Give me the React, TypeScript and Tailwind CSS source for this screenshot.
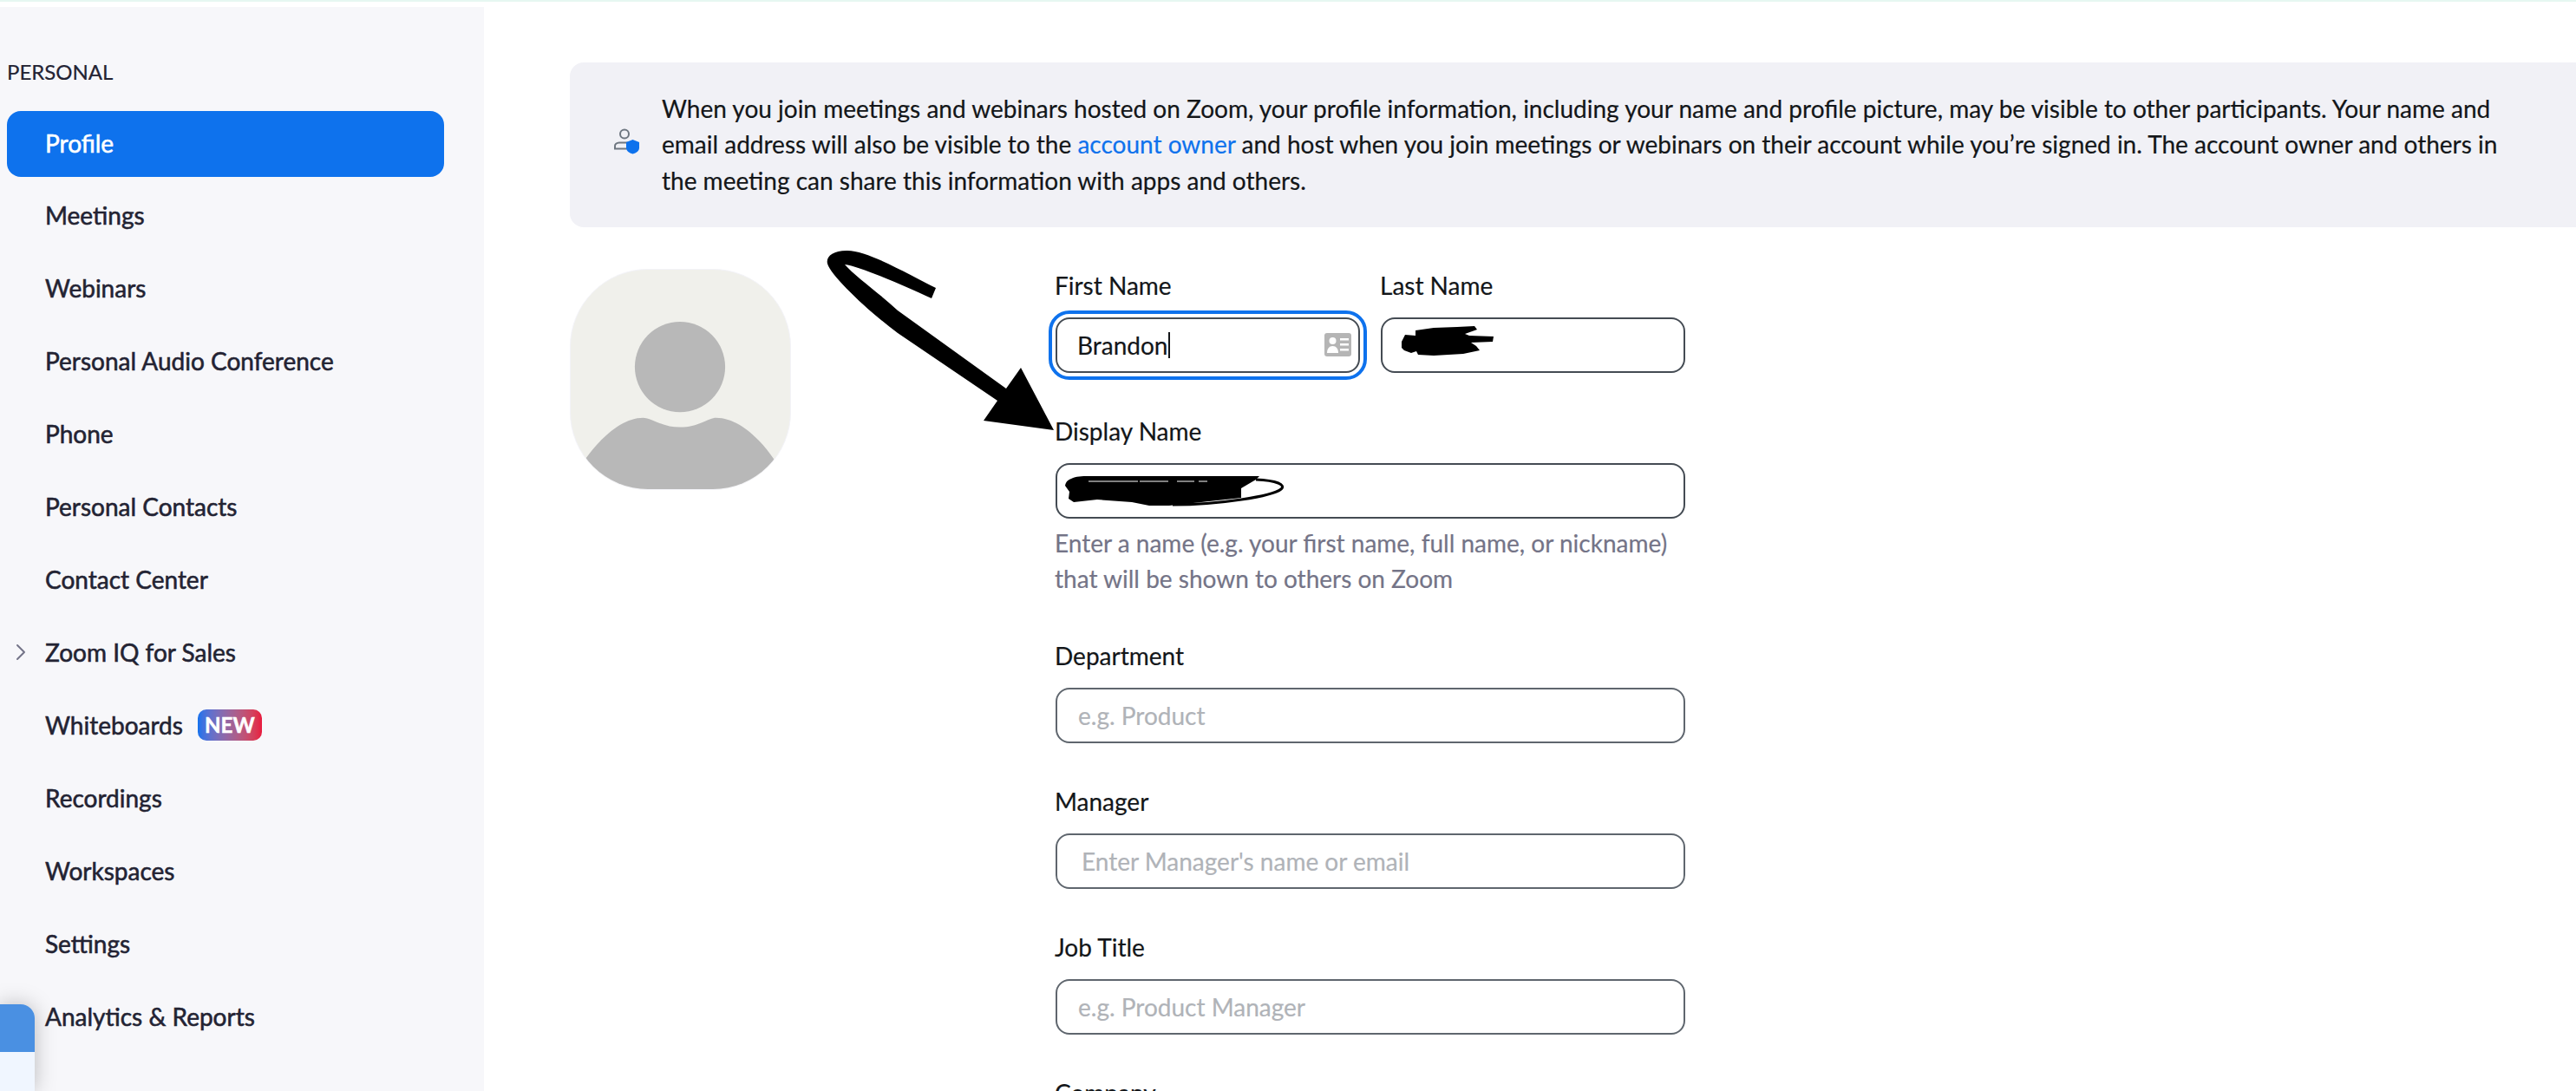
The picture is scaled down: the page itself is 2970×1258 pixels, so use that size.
import { ChevronRight } from 'lucide-react'

const navItems = [
  'Profile',
  'Meetings',
  'Webinars',
  'Personal Audio Conference',
  'Phone',
  'Personal Contacts',
  'Contact Center',
  'Zoom IQ for Sales',
  'Whiteboards',
  'Recordings',
  'Workspaces',
  'Settings',
  'Analytics & Reports',
]

function NavItem({ label }: { label: string }) {
  const active = label === 'Profile'
  return (
    <div
      className={`relative flex h-[76px] w-[504px] shrink-0 items-center rounded-[16px] pl-[44px] text-[28px] [-webkit-text-stroke:0.55px_currentColor] ${
        active ? '-mb-[2px] bg-[#0e72ed] pb-[2px] text-white' : 'text-[#232333]'
      }`}
    >
      {label === 'Zoom IQ for Sales' && (
        <ChevronRight className="absolute left-0 h-8 w-8 text-[#747487]" strokeWidth={1.5} />
      )}
      {label}
      {label === 'Whiteboards' && (
        <span className="ml-[17px] flex h-[36px] w-[74px] items-center justify-center rounded-[10px] bg-gradient-to-r from-[#0e72ed] to-[#e8173d] text-[24px] font-bold text-white">
          NEW
        </span>
      )}
    </div>
  )
}

function Sidebar() {
  return (
    <aside className="h-full w-[558px] shrink-0 bg-[#f7f7fa] pl-[8px] pt-[60px]">
      <div className="mb-[30px] h-[30px] text-[24px] leading-[30px] text-[#232333]">PERSONAL</div>
      <nav className="flex flex-col gap-2">
        {navItems.map(item => (
          <NavItem key={item} label={item} />
        ))}
      </nav>
    </aside>
  )
}

function PrivacyIcon() {
  return (
    <svg width="32" height="32" viewBox="0 0 32 32" fill="none" className="-mt-[6px] shrink-0">
      <circle cx="14" cy="6.5" r="5" stroke="#6e7680" strokeWidth="2" />
      <path d="M18 16.5H8a5 4 0 0 0-5 4.5v2.500H16" stroke="#6e7680" strokeWidth="2" strokeLinecap="round" />
      <path d="M23.500 13l7.500 3v6.500c0 3.500-3.500 6-7.500 7-4-1-7.500-3.500-7.500-7V16z" fill="#0e72ed" />
    </svg>
  )
}

function PrivacyBanner() {
  return (
    <div className="flex h-[190px] w-[2500px] items-center gap-[25px] rounded-[16px] bg-[#f1f1f6] pl-[49px]">
      <PrivacyIcon />
      <p className="text-[28px] leading-[41.6px] text-[#131619]">
        When you join meetings and webinars hosted on Zoom, your profile information, including your name and profile picture, may be visible to other participants. Your name and
        <br />
        email address will also be visible to the <span className="text-[#0e72ed]">account owner</span> and host when you join meetings or webinars on their account while you’re signed in. The account owner and others in
        <br />
        the meeting can share this information with apps and others.
      </p>
    </div>
  )
}

function Avatar() {
  return (
    <div className="h-[255px] w-[255px] shrink-0 overflow-hidden rounded-[90px] border border-[#f3f3f8] bg-[#f0f0eb]">
      <svg viewBox="0 0 255 255" className="h-full w-full">
        <circle cx="127" cy="113" r="52.500" fill="#b8b8b8" />
        <path d="M17 220C35 195 60 172 84 172c10 0 22 11 43 11s33-11 42-11c25 0 50 23 67 48L255 255H0z" fill="#b8b8b8" />
      </svg>
    </div>
  )
}

function ContactCardIcon() {
  return (
    <svg width="31" height="27" viewBox="0 0 31 27" className="absolute right-[8px] top-[16px]">
      <rect width="31" height="27" rx="3" fill="#b5b5b5" />
      <circle cx="9.500" cy="9" r="4" fill="#fff" />
      <path d="M3 23c0-5 2.500-8 6.500-8s6.500 3 6.500 8z" fill="#fff" />
      <rect x="18" y="6" width="10" height="2.500" fill="#fff" />
      <rect x="18" y="12" width="10" height="2.500" fill="#fff" />
      <rect x="18" y="18" width="10" height="2.500" fill="#fff" />
    </svg>
  )
}

function Label({ children }: { children: string }) {
  return <label className="-ml-[1px] h-[34px] text-[28px] leading-[34px] text-[#131619]">{children}</label>
}

function Field({
  label,
  placeholder,
  left = 'pl-[24px]',
}: {
  label: string
  placeholder: string
  left?: string
}) {
  return (
    <div className="flex flex-col">
      <Label>{label}</Label>
      <div className={`mt-[20px] flex h-[64px] w-[726px] items-center rounded-[16px] border-2 border-[#5f666e] ${left} text-[28px] text-[#b0b3b8]`}>
        {placeholder}
      </div>
    </div>
  )
}

function NameForm() {
  return (
    <div className="flex w-[726px] flex-col">
      <div className="flex gap-[24px]">
        <div className="flex w-[351px] flex-col">
          <Label>First Name</Label>
          <div className="relative mt-[20px] flex h-[64px] items-center rounded-[16px] border-2 border-[#444b53] pl-[23px] text-[28px] text-[#131619] outline-[4px] outline-offset-[4px] outline-[#0e72ed]">
            <span className="border-r-2 border-[#131619] pr-[1px] leading-[30px]">Brandon</span>
            <ContactCardIcon />
          </div>
        </div>
        <div className="flex w-[351px] flex-col">
          <Label>Last Name</Label>
          <div className="relative mt-[20px] h-[64px] rounded-[16px] border-2 border-[#444b53]">
            <svg width="110" height="36" viewBox="0 0 110 36" className="absolute left-[20px] top-[8px]">
              <path
                d="M2 18L6 10L18 11L18 5L39 2L66 1L86 0L89 4L75 9L80 11L108 12L107 18L82 19L88 23L92 28L73 32L39 34L21 33L19 29L13 31L5 28L2 25z"
                fill="#000"
              />
            </svg>
          </div>
        </div>
      </div>
      <div className="mt-[50px] flex flex-col">
        <Label>Display Name</Label>
        <div className="relative mt-[20px] h-[64px] rounded-[16px] border-2 border-[#444b53]">
          <svg width="260" height="44" viewBox="0 0 260 44" className="absolute left-[8px] top-[10px]">
            <path
              d="M1 14C2 9 5 7 8 6C14 3 20 3 28 3L225 3L221 7L204 17L204 28L121 37L98 37L78 33L38 30L11 33L5 29L6 21z"
              fill="#000"
            />
            <path d="M28 9H85M87 9H120M130 9H150M155 9H165" stroke="#fff" strokeWidth="1" />
            <path d="M221 7C245 8 256 13 250 18C240 26 180 36 125 36" fill="none" stroke="#000" strokeWidth="3" />
          </svg>
        </div>
        <p className="-ml-[1px] mt-[8px] text-[28px] leading-[41px] text-[#747487]">
          Enter a name (e.g. your first name, full name, or nickname)
          <br />
          that will be shown to others on Zoom
        </p>
      </div>
      <div className="mt-[51px] flex flex-col gap-[50px]">
        <Field label="Department" placeholder="e.g. Product" />
        <Field label="Manager" placeholder="Enter Manager's name or email" left="pl-[28px]" />
        <Field label="Job Title" placeholder="e.g. Product Manager" />
        <Field label="Company" placeholder="" />
      </div>
    </div>
  )
}

function ChatWidget() {
  return (
    <div className="absolute bottom-0 left-0 top-[1158px] w-[40px] overflow-hidden rounded-tr-[16px] bg-[#f0f6ff] shadow-[0_0_24px_rgba(0,0,0,0.25)]">
      <div className="h-[55px] bg-[#4a90e2]" />
    </div>
  )
}

function Arrow() {
  return (
    <svg width="300" height="240" viewBox="0 0 300 240" className="absolute left-[940px] top-[280px]">
      <path
        d="M139 52C110 38 60 8 36 9C20 9 12 16 14 24C18 38 60 78 95 104L210 182L194 205L275 216L237 144L220 168L95 78C70 55 45 38 34 25C50 27 100 48 134 64z"
        fill="#000"
      />
    </svg>
  )
}

export default function App() {
  return (
    <div className="relative h-[1258px] w-full overflow-hidden bg-white font-['Lato',sans-serif] [-webkit-text-stroke:0.2px_currentColor]">
      <div className="h-[2px] bg-[#e6f7f1]" />
      <div className="flex h-[1256px] pt-[6px]">
        <Sidebar />
        <main className="min-w-0 flex-1 pl-[99px] pt-[64px]">
          <PrivacyBanner />
          <div className="mt-[48px] flex">
            <Avatar />
            <div className="ml-[305px] mt-[2px]">
              <NameForm />
            </div>
          </div>
        </main>
      </div>
      <Arrow />
      <ChatWidget />
    </div>
  )
}
